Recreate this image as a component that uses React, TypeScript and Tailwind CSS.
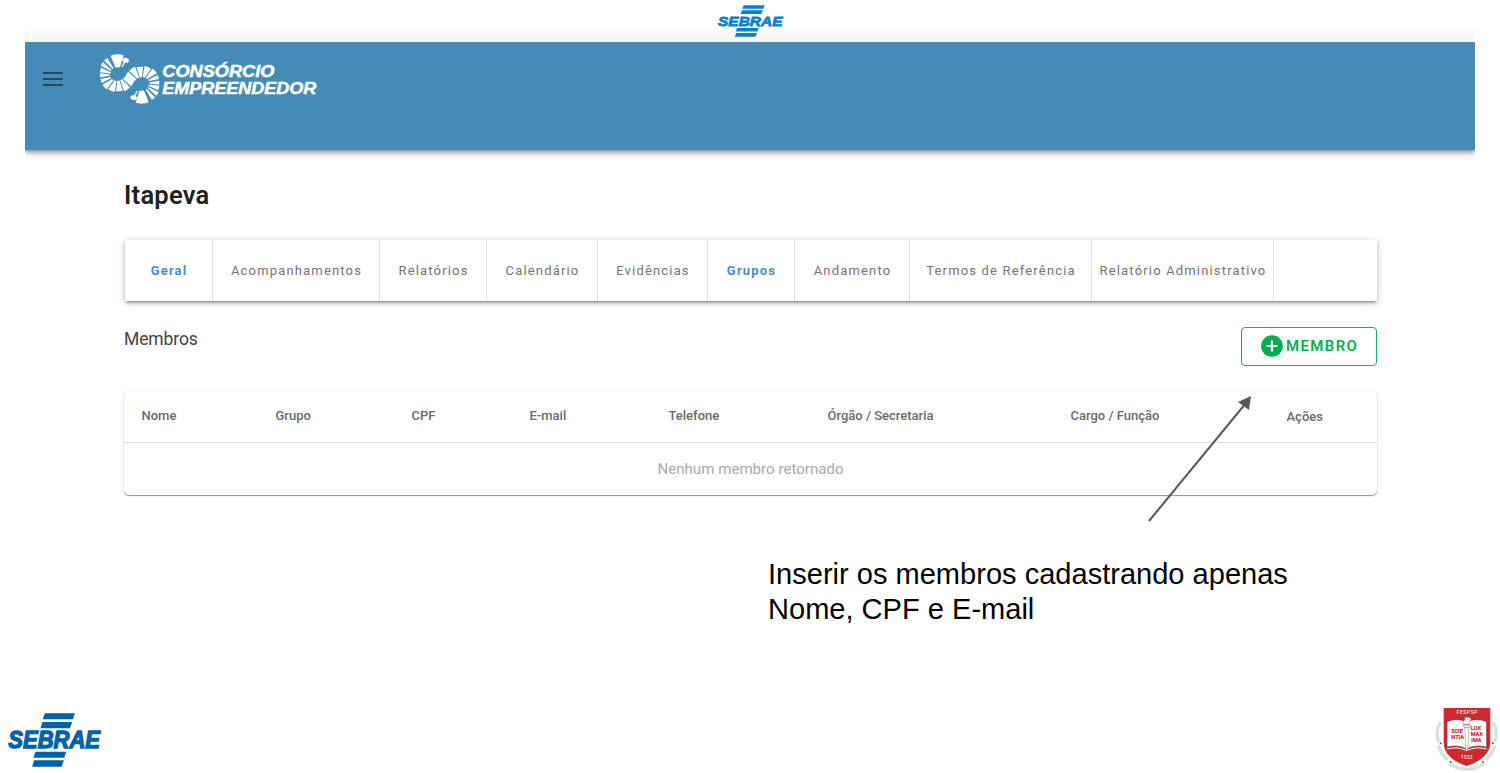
import React from "react";

type Wedge = [number, number, number, number];

const wedges: Wedge[] = [
  [-111, -74, 24, 62],
  [-134, -122, 24, 60],
  [-152, -140, 24, 59],
  [-171, -157, 23, 55],
  [173, 186, 25, 54],
  [154, 167, 23, 54],
  [128, 148, 21, 55],
  [101, 124, 19, 52],
  [73, 97, 17, 49],
  [45, 69, 17, 52],
  [18, 40, 19, 52],
];

function wedgePath([a, b, inner, outer]: Wedge) {
  const p = (deg: number, r: number) => {
    const t = (deg * Math.PI) / 180;
    return `${(84 + r * Math.cos(t)).toFixed(1)} ${(99 + r * Math.sin(t)).toFixed(1)}`;
  };
  return `M${p(a + 2, inner)}L${p(a, outer)}A${outer} ${outer} 0 0 1 ${p(b, outer)}L${p(b - 2, inner)}Z`;
}

function Ring() {
  return (
    <g>
      {wedges.map((w) => (
        <path key={w[0]} d={wedgePath(w)} />
      ))}
      <path d="M96 75l9-17" stroke="#fff" strokeWidth="4" />
      <ellipse cx="107" cy="55" rx="10" ry="7" transform="rotate(15 107 55)" />
    </g>
  );
}

function ConsorcioLogo() {
  return (
    <svg className="h-[70px] w-[240px]" viewBox="0 0 720 210" fill="#fff">
      <Ring />
      <g transform="rotate(180 119 111)">
        <Ring />
      </g>
      <g fontFamily="'Liberation Sans', Arial, sans-serif" fontWeight="700" fontStyle="italic" stroke="#fff" strokeWidth="1.5">
        <text x="217" y="104" fontSize="52" textLength="336" lengthAdjust="spacingAndGlyphs">CONSÓRCIO</text>
        <text x="217" y="157" fontSize="52" textLength="462" lengthAdjust="spacingAndGlyphs">EMPREENDEDOR</text>
      </g>
    </svg>
  );
}

function SebraeLogo({ className, color }: { className: string; color: string }) {
  return (
    <svg className={className} viewBox="-10 0 302 162" preserveAspectRatio="none" fill={color}>
      <path d="M112 1H202L196 19H106ZM105 27H194L187 46H99ZM84 116H176L170 134H78ZM80 142H169L162 161H74Z" />
      <text
        x="3" y="104" fontSize="69" fontFamily="'Liberation Sans', Arial, sans-serif" fontWeight="700" fontStyle="italic"
        stroke={color} strokeWidth="4" textLength="274" lengthAdjust="spacingAndGlyphs"
      >
        SEBRAE
      </text>
    </svg>
  );
}

function Crest() {
  return (
    <svg className="h-[73px] w-[75px]" viewBox="0 0 225 219" fontFamily="Roboto, sans-serif" fontWeight="700" textAnchor="middle">
      <g fill="none" stroke="#dedede" strokeWidth="10">
        <path d="M46 66Q30 94 41 126M204 66Q220 94 209 126" />
        <path d="M40 136Q47 162 68 180M210 136Q203 162 182 180" />
        <path d="M72 190Q95 207 125 208Q155 207 178 190" />
      </g>
      <g fill="#555">
        <circle cx="47" cy="130" r="3" />
        <circle cx="204" cy="130" r="3" />
        <circle cx="77" cy="186" r="3" />
        <circle cx="174" cy="186" r="3" />
      </g>
      <path d="M56 24H196V128C196 160 167 184 125 198C83 184 56 160 56 128Z" fill="#cb2a31" />
      <path d="M66 65Q97 51 125 66Q153 51 185 65V142Q153 132 125 147Q97 132 66 142Z" fill="#fff" stroke="#7c2428" strokeWidth="2" />
      <path d="M66 147Q97 138 125 152Q153 138 184 147" fill="none" stroke="#fff" strokeWidth="3" />
      <path d="M119 76H132L128 151H123Z" fill="#fff" stroke="#999" strokeWidth="2" />
      <path d="M114 75H136L132 83H118ZM118 74C110 65 117 59 121 60C113 53 125 48 134 53C143 58 136 63 132 67V74Z" fill="#fff" stroke="#a33" strokeWidth="1.5" />
      <g fill="#cb2a31" fontSize="18" stroke="#cb2a31" strokeWidth="0.5">
        <text x="96" y="99" textLength="34" lengthAdjust="spacingAndGlyphs">SCIE</text>
        <text x="98" y="117" textLength="38" lengthAdjust="spacingAndGlyphs">NTIA</text>
        <text x="153" y="89" textLength="31" lengthAdjust="spacingAndGlyphs">LUX</text>
        <text x="155" y="108" textLength="36" lengthAdjust="spacingAndGlyphs">MAX</text>
        <text x="154" y="126" textLength="30" lengthAdjust="spacingAndGlyphs">IMA</text>
      </g>
      <g fill="#fff" fontWeight="400">
        <text x="126" y="42" fontSize="15" textLength="63">FESPSP</text>
        <text x="125" y="178" fontSize="15" textLength="35">1933</text>
      </g>
    </svg>
  );
}

const tabs = [
  { label: "Geral", cell: "w-[88px]", active: true },
  { label: "Acompanhamentos", cell: "w-[167px]" },
  { label: "Relatórios", cell: "w-[107px]" },
  { label: "Calendário", cell: "w-[111px]" },
  { label: "Evidências", cell: "w-[110px]" },
  { label: "Grupos", cell: "w-[87px]", active: true },
  { label: "Andamento", cell: "w-[115px]" },
  { label: "Termos de Referência", cell: "w-[182px]" },
  { label: "Relatório Administrativo", cell: "w-[182px]" },
];

const columns = [
  { label: "Nome", cell: "w-[134px]" },
  { label: "Grupo", cell: "w-[136px]" },
  { label: "CPF", cell: "w-[118px]" },
  { label: "E-mail", cell: "w-[139px]" },
  { label: "Telefone", cell: "w-[159px]" },
  { label: "Órgão / Secretaria", cell: "w-[243px]" },
  { label: "Cargo / Função", cell: "w-[216px]" },
  { label: "Ações", cell: "pt-[2px]" },
];

export default function App() {
  return (
    <div className="relative flex h-[773px] w-[1500px] flex-col overflow-hidden bg-white font-['Roboto',sans-serif]">
      <div className="mx-[25px] flex h-[42px] shrink-0 justify-center bg-linear-to-b from-white from-60% to-[#f5f5f5] pt-[5px] pl-px">
        <SebraeLogo className="h-[32px] w-[71px]" color="#0a83c6" />
      </div>
      <header className="mx-[25px] flex h-[108px] shrink-0 items-start bg-[#458bb8] shadow-[0_2px_4px_rgba(0,0,0,0.35),0_4px_7px_rgba(0,0,0,0.16)] [clip-path:inset(0_0_-12px_0)]">
        <button className="mt-[30px] ml-[18px] flex h-[14px] w-5 flex-col justify-between" aria-label="Menu">
          <span className="h-[2px] w-full bg-[#28485c]" />
          <span className="h-[2px] w-full bg-[#28485c]" />
          <span className="h-[2px] w-full bg-[#28485c]" />
        </button>
        <div className="ml-[27px]">
          <ConsorcioLogo />
        </div>
      </header>

      <main className="ml-[124px] w-[1253px]">
        <h1 className="mt-[27px] h-9 text-[25.5px] leading-9 font-semibold tracking-[0.25px] text-[#212121]">Itapeva</h1>
        <nav className="mt-[27px] ml-px flex h-[61px] bg-white shadow-[0_3px_2px_-2px_rgba(0,0,0,0.25),0_2px_4px_rgba(0,0,0,0.25),0_1px_9px_rgba(0,0,0,0.13)]">
          {tabs.map((t) => (
            <div key={t.label} className={`flex shrink-0 items-center justify-center border-r border-[#e0e0e0] pl-px text-[13px] tracking-[1.17px] whitespace-nowrap ${t.cell} ${t.active ? "font-bold text-[#4a90c0]" : "text-[#757575]"}`}>
              {t.label}
            </div>
          ))}
        </nav>
        <section className="mt-[26px] flex h-[39px] justify-between">
          <h2 className="text-[17.5px] leading-[24px] tracking-[-0.1px] text-[#424242]">Membros</h2>
          <button className="flex h-[39px] w-[136px] items-center rounded-[4px] border border-[#12b35b] pl-[17px] text-[#00ae50]">
            <svg className="mb-px size-[26px] shrink-0" viewBox="0 0 24 24" fill="currentColor">
              <path d="M12 2C6.48 2 2 6.48 2 12s4.48 10 10 10 10-4.48 10-10S17.52 2 12 2zm5 11h-4v4h-2v-4H7v-2h4V7h2v4h4v2z" />
            </svg>
            <span className="ml-px text-[15px] font-semibold tracking-[1.35px]">MEMBRO</span>
          </button>
        </section>
        <section className="mt-[25px] flex h-[104px] flex-col rounded-[5px] bg-white shadow-[0_1px_1px_rgba(0,0,0,0.4),0_0_3px_rgba(0,0,0,0.13)]">
          <div className="flex h-[52px] shrink-0 items-center border-b border-[#dedede] pb-[2px] pl-[17.5px] text-[13px] font-medium text-[#6b6b6b]">
            {columns.map((c) => (
              <div key={c.label} className={`shrink-0 whitespace-nowrap ${c.cell}`}>{c.label}</div>
            ))}
          </div>
          <p className="flex flex-1 items-center justify-center pt-px text-[15.1px] text-[#aaa]">Nenhum membro retornado</p>
        </section>
      </main>

      <p className="mt-[62px] ml-[768px] w-[540px] font-['Liberation_Sans',Arial,sans-serif] text-[29.05px] leading-[35px] whitespace-nowrap text-black">
        Inserir os membros cadastrando apenas
        <br />
        Nome, CPF e E-mail
      </p>

      <footer className="mt-auto flex h-[73px] shrink-0 items-start justify-between pl-[4px]">
        <SebraeLogo className="mt-[13px] h-[54px] w-[101px]" color="#0063a9" />
        <Crest />
      </footer>

      <svg className="absolute top-[390px] left-[1140px] h-[140px] w-[120px]" viewBox="0 0 120 140">
        <path d="M9 131L106 13" stroke="#595959" strokeWidth="2" />
        <path d="M111 6L98 12L109 20Z" fill="#595959" />
      </svg>
    </div>
  );
}
